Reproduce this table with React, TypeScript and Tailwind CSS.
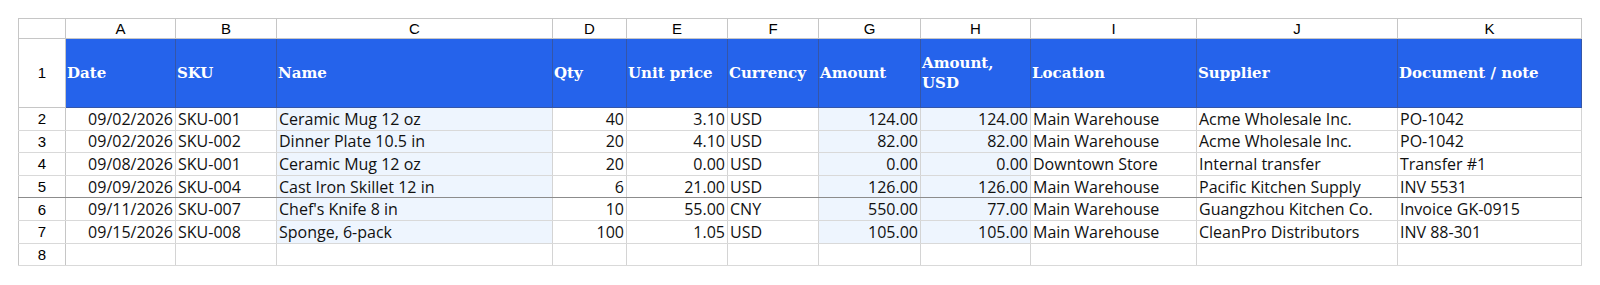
import React from "react";

const cols = [
  { key: "A", w: 110, title: "Date", align: "right", fill: false },
  { key: "B", w: 101, title: "SKU", align: "left", fill: false },
  { key: "C", w: 276, title: "Name", align: "left", fill: true },
  { key: "D", w: 74, title: "Qty", align: "right", fill: false },
  { key: "E", w: 101, title: "Unit price", align: "right", fill: false },
  { key: "F", w: 91, title: "Currency", align: "left", fill: false },
  { key: "G", w: 102, title: "Amount", align: "right", fill: true },
  { key: "H", w: 110, title: "Amount, USD", align: "right", fill: true },
  { key: "I", w: 166, title: "Location", align: "left", fill: false },
  { key: "J", w: 201, title: "Supplier", align: "left", fill: false },
  { key: "K", w: 184, title: "Document / note", align: "left", fill: false },
];

const rows: string[][] = [
  ["09/02/2026", "SKU-001", "Ceramic Mug 12 oz", "40", "3.10", "USD", "124.00", "124.00", "Main Warehouse", "Acme Wholesale Inc.", "PO-1042"],
  ["09/02/2026", "SKU-002", "Dinner Plate 10.5 in", "20", "4.10", "USD", "82.00", "82.00", "Main Warehouse", "Acme Wholesale Inc.", "PO-1042"],
  ["09/08/2026", "SKU-001", "Ceramic Mug 12 oz", "20", "0.00", "USD", "0.00", "0.00", "Downtown Store", "Internal transfer", "Transfer #1"],
  ["09/09/2026", "SKU-004", "Cast Iron Skillet 12 in", "6", "21.00", "USD", "126.00", "126.00", "Main Warehouse", "Pacific Kitchen Supply", "INV 5531"],
  ["09/11/2026", "SKU-007", "Chef's Knife 8 in", "10", "55.00", "CNY", "550.00", "77.00", "Main Warehouse", "Guangzhou Kitchen Co.", "Invoice GK-0915"],
  ["09/15/2026", "SKU-008", "Sponge, 6-pack", "100", "1.05", "USD", "105.00", "105.00", "Main Warehouse", "CleanPro Distributors", "INV 88-301"],
  ["", "", "", "", "", "", "", "", "", "", ""],
];

export default function App() {
  return (
    <div className="w-[1600px] h-[285px] bg-white pt-[18px] pl-[18px]">
      <table className="table-fixed border-collapse border border-[#a6a6a6]" style={{ width: 1564 }}>
        <colgroup>
          <col style={{ width: 47 }} />
          {cols.map((c) => (
            <col key={c.key} style={{ width: c.w }} />
          ))}
        </colgroup>
        <thead>
          <tr className="h-[20px]">
            <th className="border border-[#c6c6c6] bg-white p-0"></th>
            {cols.map((c) => (
              <th
                key={c.key}
                className="border border-[#c6c6c6] bg-white p-0 text-center align-middle font-normal text-[15px] leading-none text-black font-['Liberation_Sans',Arial,sans-serif]"
              >
                {c.key}
              </th>
            ))}
          </tr>
        </thead>
        <tbody>
          <tr className="h-[69px]">
            <td className="border border-[#c6c6c6] bg-white p-0 text-center align-middle text-[15px] text-black font-['Liberation_Sans',Arial,sans-serif]">
              1
            </td>
            {cols.map((c) => (
              <td
                key={c.key}
                className="border border-[#3556a8] bg-[#2563eb] px-[1px] py-0 text-left align-middle text-white font-bold text-[15px] leading-[20px] font-['DejaVu_Serif',serif]"
              >
                {c.key === "H" ? (
                  <>
                    Amount,
                    <br />
                    USD
                  </>
                ) : (
                  c.title
                )}
              </td>
            ))}
          </tr>
          {rows.map((r, i) => (
            <tr key={i} className="h-[22.6px]">
              <td
                className={`border-x border-[#c6c6c6] p-0 text-center align-middle text-[15px] leading-none text-black font-['Liberation_Sans',Arial,sans-serif] ${
                  i === 3 ? "border-b border-b-[#8c8c8c]" : "border-b border-b-[#d9d9d9]"
                }`}
              >
                {i + 2}
              </td>
              {r.map((v, j) => {
                const c = cols[j];
                const fill = c.fill && i < 6;
                return (
                  <td
                    key={j}
                    className={`border-x border-x-[#d4d4d4] px-[2px] py-0 align-middle whitespace-nowrap overflow-hidden text-[16px] leading-none text-[#111] font-['Open_Sans','Noto_Sans',sans-serif] ${
                      c.align === "right" ? "text-right" : "text-left"
                    } ${fill ? "bg-[#eef5fe]" : "bg-white"} ${
                      i === 3 ? "border-b border-b-[#8c8c8c]" : "border-b border-b-[#d9d9d9]"
                    }`}
                  >
                    {v}
                  </td>
                );
              })}
            </tr>
          ))}
        </tbody>
      </table>
    </div>
  );
}
